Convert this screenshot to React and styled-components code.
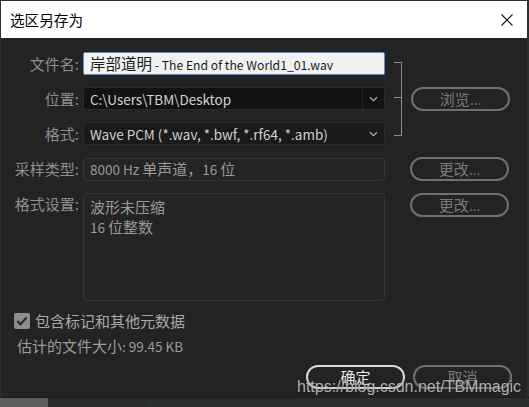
import React, { useState } from "react";
import styled, { createGlobalStyle } from "styled-components";

const GlobalStyle = createGlobalStyle`
  html, body {
    margin: 0;
    padding: 0;
    background: #1d2925;
    overflow: hidden;
  }
  * {
    box-sizing: border-box;
  }
`;

const FONT = `"Noto Sans CJK SC", "Noto Sans", sans-serif`;

const Screen = styled.div`
  width: 529px;
  height: 407px;
  display: flex;
  flex-direction: column;
  position: relative;
  background: #2a2e2c;
`;

const Dialog = styled.div`
  width: 526px;
  height: 396px;
  margin: 1px 0 0 1px;
  display: flex;
  flex-direction: column;
  font-family: ${FONT};
  font-size: 13.5px;
`;

// CJK glyphs in the dialog render a little larger than the latin text
const Cjk = styled.span`
  font-size: ${(p) => p.$size || 15}px;
`;

const TitleBar = styled.div`
  height: 37px;
  flex-shrink: 0;
  background: #ffffff;
  display: flex;
  align-items: center;
  justify-content: space-between;
  padding: 0 14px 0 9px;
`;

const TitleText = styled.div`
  font-size: 14.6px;
  color: #000;
`;

const CloseButton = styled.div`
  width: 12px;
  height: 12px;
  display: flex;
`;

const Body = styled.div`
  flex: 1;
  background: #232323;
  padding: 14px 0 0 8px;
  display: flex;
  flex-direction: column;
`;

const TopSection = styled.div`
  display: flex;
  align-items: center;
`;

const FieldColumn = styled.div`
  display: flex;
  flex-direction: column;
  gap: 12px;
`;

const Row = styled.div`
  display: flex;
  align-items: ${(p) => (p.$top ? "flex-start" : "center")};
  margin-top: ${(p) => p.$mt || 0}px;
`;

const Label = styled.div`
  width: 70px;
  margin-right: 4px;
  text-align: right;
  font-size: 15px;
  color: #8f8f8f;
  white-space: nowrap;
  padding-top: ${(p) => (p.$top ? "1px" : "0")};
  line-height: 20px;
`;

const TextInput = styled.div`
  width: 302px;
  height: 23px;
  background: #f1f1f1;
  border: 1px solid #5a8fd0;
  border-radius: 2px;
  color: #1a1a1a;
  font-size: 12.2px;
  line-height: 21px;
  padding-left: 6px;
  white-space: nowrap;
  overflow: hidden;
`;

const Select = styled.div`
  width: 302px;
  height: 23px;
  background: ${(p) => p.$bg || "#121212"};
  border: 1px solid #2c2c2c;
  border-radius: 3px;
  display: flex;
  align-items: center;
  color: #d2d2d2;
`;

const SelectValue = styled.div`
  flex: 1;
  padding-left: 6px;
  white-space: nowrap;
`;

const Chevron = styled.div`
  width: 22px;
  height: 100%;
  display: flex;
  align-items: center;
  justify-content: center;
  border-left: 1px solid ${(p) => (p.$divider ? "#262626" : "transparent")};
`;

const ReadField = styled.div`
  width: 302px;
  height: ${(p) => p.$h || 23}px;
  border: 1px solid #333;
  border-radius: 3px;
  background: #242424;
  color: #9a9a9a;
  line-height: 20px;
  padding: ${(p) => (p.$multi ? "3px 6px" : "0 6px")};
  display: ${(p) => (p.$multi ? "block" : "flex")};
  align-items: center;
  white-space: pre;
`;

const Bracket = styled.div`
  width: 8px;
  height: 74px;
  margin-left: 9px;
  border: 1.5px solid #8a8a8a;
  border-left: none;
  position: relative;

  &::after {
    content: "";
    position: absolute;
    left: 0;
    top: 34px;
    width: 6.5px;
    border-top: 1.5px solid #8a8a8a;
  }
`;

const PillButton = styled.button`
  width: 99px;
  height: 24px;
  border-radius: 12px;
  border: 2px solid ${(p) => (p.$primary ? "#d9d9d9" : "#707070")};
  background: transparent;
  color: ${(p) => (p.$primary ? "#e8e8e8" : "#7a7a7a")};
  font-family: ${FONT};
  font-size: 13.5px;
  line-height: 18px;
  padding: 0;
  margin-left: ${(p) => p.$ml || 0}px;
  cursor: pointer;
`;

const CheckRow = styled.label`
  display: flex;
  align-items: center;
  margin: 9px 0 0 5px;
  gap: 5px;
  font-size: 15px;
  color: #a8a8a8;
  cursor: pointer;
`;

const CheckBox = styled.span`
  width: 16px;
  height: 16px;
  border-radius: 2px;
  background: #8d8d8d;
  display: flex;
  align-items: center;
  justify-content: center;
`;

const Estimate = styled.div`
  margin: 5px 0 0 8px;
  line-height: 20px;
  color: #9c9c9c;
`;

const Footer = styled.div`
  display: flex;
  justify-content: flex-end;
  gap: 8px;
  margin-top: 9px;
  padding-right: 15px;
`;

const Desktop = styled.div`
  flex: 1;
  display: flex;
  border-top: 1px solid #1a1a1a;
`;

const DesktopStrip = styled.div`
  width: ${(p) => p.$w}px;
  background: ${(p) => p.$c};
`;

const Watermark = styled.div`
  position: absolute;
  left: 297px;
  top: 378px;
  font-family: "Liberation Sans", Arial, sans-serif;
  font-size: 16px;
  color: rgba(215, 215, 215, 0.82);
  text-shadow: 0 0 1px rgba(0, 0, 0, 0.6);
  pointer-events: none;
  white-space: nowrap;
`;

function ChevronIcon() {
  return (
    <svg width="9" height="6" viewBox="0 0 9 6">
      <path d="M1 1.2 L4.5 4.6 L8 1.2" fill="none" stroke="#b0b0b0" strokeWidth="1.2" />
    </svg>
  );
}

export default function App() {
  const [checked, setChecked] = useState(true);

  return (
    <Screen>
      <GlobalStyle />
      <Dialog>
        <TitleBar>
          <TitleText>选区另存为</TitleText>
          <CloseButton>
            <svg width="12" height="12" viewBox="0 0 12 12">
              <path d="M0.5 0.5 L11.5 11.5 M11.5 0.5 L0.5 11.5" stroke="#111" strokeWidth="1.1" />
            </svg>
          </CloseButton>
        </TitleBar>
        <Body>
          <TopSection>
            <FieldColumn>
              <Row>
                <Label>文件名:</Label>
                <TextInput>
                  <Cjk $size={15.5}>岸部道明</Cjk>
                  {" - The End of the World1_01.wav"}
                </TextInput>
              </Row>
              <Row>
                <Label>位置:</Label>
                <Select>
                  <SelectValue>C:\Users\TBM\Desktop</SelectValue>
                  <Chevron $divider>
                    <ChevronIcon />
                  </Chevron>
                </Select>
              </Row>
              <Row>
                <Label>格式:</Label>
                <Select $bg="#1a1a1a">
                  <SelectValue>Wave PCM (*.wav, *.bwf, *.rf64, *.amb)</SelectValue>
                  <Chevron>
                    <ChevronIcon />
                  </Chevron>
                </Select>
              </Row>
            </FieldColumn>
            <Bracket />
            <PillButton $ml={9}>
              <Cjk>浏览</Cjk>...
            </PillButton>
          </TopSection>

          <Row $mt={12}>
            <Label>采样类型:</Label>
            <ReadField>
              {"8000 Hz "}
              <Cjk>单声道，</Cjk>
              {"16 "}
              <Cjk>位</Cjk>
            </ReadField>
            <PillButton $ml={25}>
              <Cjk>更改</Cjk>...
            </PillButton>
          </Row>

          <Row $mt={12} $top>
            <Label $top>格式设置:</Label>
            <ReadField $h={108} $multi>
              <Cjk>波形未压缩</Cjk>
              <br />
              {"16 "}
              <Cjk>位整数</Cjk>
            </ReadField>
            <PillButton $ml={25}>
              <Cjk>更改</Cjk>...
            </PillButton>
          </Row>

          <CheckRow onClick={() => setChecked(!checked)}>
            <CheckBox>
              {checked && (
                <svg width="12" height="10" viewBox="0 0 12 10">
                  <path d="M1.2 5 L4.4 8.2 L10.8 1.4" fill="none" stroke="#262626" strokeWidth="2" />
                </svg>
              )}
            </CheckBox>
            包含标记和其他元数据
          </CheckRow>

          <Estimate>
            <Cjk>估计的文件大小</Cjk>: 99.45 KB
          </Estimate>

          <Footer>
            <PillButton $primary>
              <Cjk>确定</Cjk>
            </PillButton>
            <PillButton>
              <Cjk>取消</Cjk>
            </PillButton>
          </Footer>
        </Body>
      </Dialog>
      <Desktop>
        <DesktopStrip $w={48} $c="#5e5e5e" />
        <DesktopStrip $w={100} $c="#2c2c2c" />
        <DesktopStrip $w={381} $c="#2a302d" />
      </Desktop>
      <Watermark>https://blog.csdn.net/TBMmagic</Watermark>
    </Screen>
  );
}
